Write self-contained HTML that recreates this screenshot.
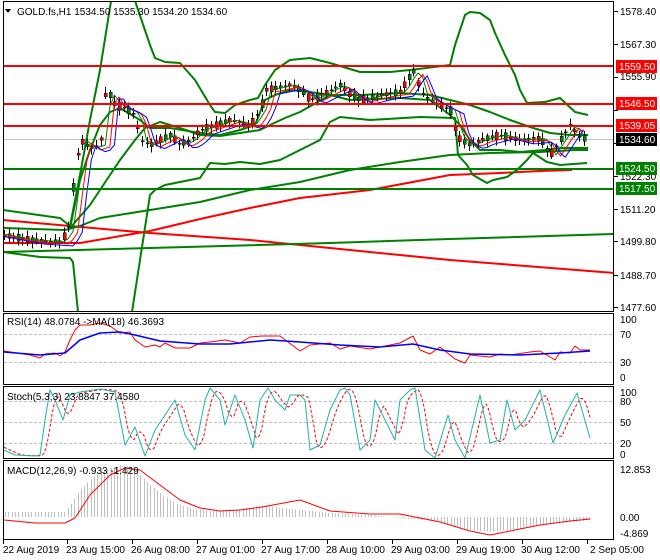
<!DOCTYPE html>
<html><head><meta charset="utf-8"><style>
html,body{margin:0;padding:0;background:#fff;width:660px;height:560px;overflow:hidden;font-family:"Liberation Sans",sans-serif;}
svg{position:absolute;left:0;top:0}
.t{font-family:"Liberation Sans",sans-serif;font-size:10px;fill:#000}
</style></head><body>
<svg id="s" width="660" height="560" viewBox="0 0 660 560" shape-rendering="crispEdges">
<g id="g"></g>
<rect x="3.5" y="1.5" width="610" height="310" fill="none" stroke="#000"/>
<rect x="3.5" y="313.5" width="610" height="71" fill="none" stroke="#000"/>
<rect x="3.5" y="386.5" width="610" height="72" fill="none" stroke="#000"/>
<rect x="3.5" y="460.5" width="610" height="79" fill="none" stroke="#000"/>
<path d="M5 9 l6 0 l-3 4z" fill="#000"/>
<text class="t" x="17" y="15">GOLD.fs,H1  1534.50 1535.30 1534.20 1534.60</text>
<text class="t" x="7" y="325">RSI(14) 48.0784  -&gt;MA(18) 46.3693</text>
<text class="t" x="7" y="400">Stoch(5,3,3) 23.8847 37.4580</text>
<text class="t" x="7" y="474">MACD(12,26,9) -0.933 -1.429</text>
<text class="t" x="620" y="15">1578.40</text>
<text class="t" x="620" y="48">1567.30</text>
<text class="t" x="620" y="80">1555.90</text>
<text class="t" x="620" y="180">1522.30</text>
<text class="t" x="620" y="213">1511.20</text>
<text class="t" x="620" y="245">1499.80</text>
<text class="t" x="620" y="279">1488.70</text>
<text class="t" x="620" y="311">1477.60</text>
<rect x="616" y="60" width="41" height="13" fill="#f00"/><text class="t" x="619" y="70" style="fill:#fff">1559.50</text>
<rect x="616" y="97" width="41" height="13" fill="#f00"/><text class="t" x="619" y="107" style="fill:#fff">1546.50</text>
<rect x="616" y="119" width="41" height="13" fill="#f00"/><text class="t" x="619" y="129" style="fill:#fff">1539.05</text>
<rect x="616" y="133" width="41" height="13" fill="#000"/><text class="t" x="619" y="143" style="fill:#fff">1534.60</text>
<rect x="616" y="162" width="41" height="13" fill="#008000"/><text class="t" x="619" y="172" style="fill:#fff">1524.50</text>
<rect x="616" y="182" width="41" height="13" fill="#008000"/><text class="t" x="619" y="192" style="fill:#fff">1517.50</text>
<text class="t" x="620" y="323">100</text>
<text class="t" x="620" y="338">70</text>
<text class="t" x="620" y="366">30</text>
<text class="t" x="620" y="381">0</text>
<text class="t" x="620" y="396">100</text>
<text class="t" x="620" y="405">80</text>
<text class="t" x="620" y="426">50</text>
<text class="t" x="620" y="447">20</text>
<text class="t" x="620" y="458">0</text>
<text class="t" x="620" y="473">12.853</text>
<text class="t" x="620" y="521">0.00</text>
<text class="t" x="620" y="537">-4.869</text>
<text class="t" x="3" y="553">22 Aug 2019</text>
<text class="t" x="66" y="553">23 Aug 15:00</text>
<text class="t" x="131" y="553">26 Aug 08:00</text>
<text class="t" x="196" y="553">27 Aug 01:00</text>
<text class="t" x="261" y="553">27 Aug 17:00</text>
<text class="t" x="326" y="553">28 Aug 10:00</text>
<text class="t" x="391" y="553">29 Aug 03:00</text>
<text class="t" x="456" y="553">29 Aug 19:00</text>
<text class="t" x="521" y="553">30 Aug 12:00</text>
<text class="t" x="590" y="553">2 Sep 05:00</text>
</svg>
<script>
var g=document.getElementById('g');var NS='http://www.w3.org/2000/svg';
function el(n,a){var e=document.createElementNS(NS,n);for(var k in a)e.setAttribute(k,a[k]);g.appendChild(e);return e;}
function pl(p,c,w,d){el('polyline',{points:p.map(function(q){return q.join(',')}).join(' '),fill:'none',stroke:c,'stroke-width':w||1,'stroke-dasharray':d||'','shape-rendering':'auto','stroke-linejoin':'round'});}
function ln(x1,y1,x2,y2,c,w,d){el('line',{x1:x1,y1:y1,x2:x2,y2:y2,stroke:c,'stroke-width':w||1,'stroke-dasharray':d||''});}
function interp(p,x){for(var i=1;i<p.length;i++){if(x<=p[i][0]){var a=p[i-1],b=p[i];return a[1]+(b[1]-a[1])*(x-a[0])/(b[0]-a[0]);}}return p[p.length-1][1];}
var cp=el('clipPath',{id:'c'});var r=document.createElementNS(NS,'rect');r.setAttribute('x',4);r.setAttribute('y',2);r.setAttribute('width',609);r.setAttribute('height',309);cp.appendChild(r);
var mg=el('g',{'clip-path':'url(#c)'});var G=g;g=mg;
ln(4,139.5,613,139.5,'#c0c0c0',1);
pl([[3,220],[70,226],[150,233],[250,240],[330,248],[450,260],[614,273]],'#f00',2);
pl([[3,252],[150,248],[330,243],[450,239],[614,234]],'#008000',2);
pl([[3,243],[80,243],[150,231],[200,219],[250,208],[300,198],[370,190],[450,175],[500,173],[540,171],[572,170]],'#f00',2);
pl([[3,228],[65,230],[80,226],[100,218],[150,210],[200,202],[250,190],[300,182],[350,170],[400,162],[450,155],[490,153],[540,152],[575,150],[588,150]],'#008000',2);
pl([[3,210],[60,218],[70,226],[80,175],[90,120],[100,70],[108,20],[112,-5]],'#008000',2);
pl([[133,-5],[150,45],[155,58],[165,62],[180,63],[195,80],[210,105],[215,112],[225,113],[235,105],[250,100],[258,98],[265,85],[275,70],[290,60],[310,58],[330,63],[360,72],[390,72],[410,70],[450,65],[455,45],[465,15],[470,12],[480,13],[490,20],[495,33],[505,55],[515,75],[520,90],[527,103],[545,102],[560,98],[575,112],[588,115]],'#008000',2);
pl([[3,252],[40,257],[70,258],[73,262],[78,312]],'#008000',2);
pl([[132,312],[150,195],[155,190],[165,185],[180,182],[200,178],[210,163],[225,164],[240,162],[260,164],[280,160],[300,150],[320,140],[330,122],[340,117],[370,120],[420,117],[455,118],[458,155],[467,165],[473,175],[487,183],[493,180],[507,177],[517,170],[527,160],[533,153],[547,162],[560,165],[587,163]],'#008000',2);
pl([[70,228],[80,180],[90,150],[100,125],[110,112],[120,108],[140,120],[150,128],[170,128],[200,133],[220,135],[240,130],[255,125],[265,100],[275,95],[290,90],[310,92],[330,95],[360,95],[400,93],[430,95],[450,100],[470,105],[490,112],[510,120],[530,127],[550,133],[570,135],[588,135]],'#008000',2);
pl([[70,228],[90,205],[100,190],[110,175],[120,160],[135,140],[145,128],[160,122],[180,128],[200,135],[220,136],[240,133],[260,130],[270,125],[285,118],[300,112],[330,95],[350,100],[400,98],[430,100],[450,115],[460,125],[470,140],[480,150],[500,150],[520,152],[545,150],[560,148],[588,148]],'#008000',2);
var P=[[3,235],[30,240],[60,242],[68,230],[75,170],[80,140],[90,148],[100,145],[105,95],[110,95],[115,105],[125,108],[135,115],[140,140],[150,145],[160,140],[170,135],[180,145],[190,140],[200,130],[215,125],[230,120],[250,125],[260,110],[265,90],[275,88],[290,85],[300,90],[310,100],[320,95],[340,85],[350,95],[360,100],[380,95],[400,92],[410,75],[415,70],[420,92],[430,100],[440,105],[450,110],[455,130],[460,140],[470,145],[480,140],[500,135],[520,140],[540,138],[550,155],[560,140],[570,125],[580,138],[588,139]];
var ema1=[],ema2=[],ema3=[];
for(var x=4;x<=588;x+=4.6){var y=interp(P,x);var d=Math.sin(x*1.7)*5+Math.cos(x*0.9)*3;var o=y-d/2,c=y+d/2;var t=Math.min(o,c),b=Math.max(o,c);
ln(Math.round(x)+0.5,t-2-Math.abs(Math.sin(x))*4,Math.round(x)+0.5,b+2+Math.abs(Math.cos(x))*4,'#000',1);
el('rect',{x:Math.round(x)-1,y:t,width:3,height:Math.max(b-t,1),fill:(c<o?'#008000':'#f00'),stroke:'#000','stroke-width':0.5});
ema1.push([x,interp(P,x-6)]);ema2.push([x,interp(P,x-10)+2]);ema3.push([x,interp(P,x-14)+4]);}
pl(ema1,'#008000',1);pl(ema2,'#f00',1);pl(ema3,'#00f',1);
ln(4,66,614,66,'#f00',2);ln(4,104,614,104,'#f00',2);ln(4,126,614,126,'#f00',2);
ln(4,169,614,169,'#008000',2);ln(4,189,614,189,'#008000',2);
g=G;
ln(4,334.5,613,334.5,'#c0c0c0',1,'3,2');ln(4,362.5,613,362.5,'#c0c0c0',1,'3,2');
pl([[4,351],[30,355],[40,358],[45,354],[55,353],[60,356],[65,352],[70,340],[75,330],[80,325],[90,325],[100,323],[110,326],[120,333],[130,332],[135,340],[145,347],[155,345],[160,347],[165,343],[175,348],[190,348],[200,343],[210,342],[225,340],[240,343],[250,337],[262,336],[280,336],[300,351],[310,345],[330,343],[340,349],[350,346],[370,349],[385,346],[400,343],[413,336],[420,350],[430,354],[440,347],[455,359],[465,363],[470,355],[490,357],[500,354],[510,355],[530,352],[540,351],[555,360],[560,352],[570,353],[575,346],[580,350],[590,350]],'#f00',1);
pl([[4,352],[40,355],[65,353],[80,340],[100,333],[120,332],[135,335],[160,341],[200,344],[230,344],[270,340],[300,342],[340,345],[380,347],[413,344],[440,350],[470,354],[520,355],[560,353],[590,351]],'#00f',1.5);
[401.5,422.5,443.5].forEach(function(y){ln(4,y,613,y,'#c0c0c0',1,'3,2');});
var S=[[4,450],[15,455],[35,456],[40,455],[45,420],[50,390],[55,400],[63,420],[70,395],[80,392],[100,389],[115,392],[125,445],[135,427],[145,456],[155,430],[165,415],[175,400],[185,435],[195,450],[205,400],[210,388],[220,400],[225,425],[235,395],[245,420],[253,448],[260,400],[268,388],[275,400],[285,410],[290,395],[300,395],[305,400],[310,450],[320,445],[330,410],[340,390],[345,388],[350,395],[360,450],[370,440],[375,400],[385,420],[395,440],[400,400],[410,390],[415,388],[425,450],[435,458],[448,415],[455,440],[465,458],[480,395],[490,443],[500,440],[507,400],[515,430],[525,420],[540,390],[553,443],[565,415],[577,393],[590,438]];
var S2=[];for(var x=4;x<=590;x+=2){var a=(interp(S,x-3)+interp(S,x-6)+interp(S,x-9))/3;S2.push([x,a]);}
pl(S2,'#f00',1,'3,2');pl(S,'#20b2aa',1);
var H=[[3,512],[65,512],[70,505],[80,490],[90,480],[100,472],[110,468],[120,465],[130,467],[140,475],[150,485],[160,493],[170,500],[180,505],[190,508],[210,511],[240,509],[265,505],[280,508],[300,510],[330,513],[370,515],[400,518],[430,520],[450,525],[470,530],[490,532],[510,530],[530,527],[560,523],[590,520]];
for(var x=5;x<=590;x+=3.3){var y=interp(H,x);ln(Math.round(x)+0.5,517,Math.round(x)+0.5,y,'#c0c0c0',1);}
pl([[4,520],[35,523],[65,523],[75,518],[90,495],[110,475],[125,468],[140,470],[160,485],[180,500],[200,508],[220,511],[240,510],[262,507],[300,500],[330,511],[370,514],[400,514],[440,522],[470,531],[490,535],[510,531],[540,525],[570,521],[590,519]],'#f00',1);
[3,67,132,197,262,327,392,457,522,587].forEach(function(x){ln(x+0.5,540,x+0.5,544,'#000',1);});
[11,44,77,110,143,176,209,241,275,307].forEach(function(y){ln(614,y+0.5,618,y+0.5,'#000',1);});
</script>
</body></html>
